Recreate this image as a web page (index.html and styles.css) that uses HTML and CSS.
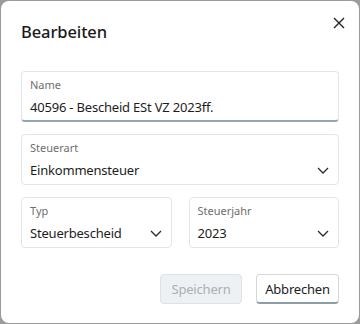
FILE: index.html
```html
<!DOCTYPE html>
<html lang="de">
<head>
    <meta charset="UTF-8">
    <meta name="viewport" content="width=device-width, initial-scale=1.0">
    <title>Bearbeiten</title>
    <link rel="stylesheet" href="styles.css">
</head>
<body>
    <div class="dialog">
        <button class="close" aria-label="Schließen">
            <svg width="12" height="12" viewBox="0 0 12 12"><path d="M1 1 L11 11 M11 1 L1 11" stroke="#222" stroke-width="1.4" fill="none"/></svg>
        </button>
        <h1 class="title">Bearbeiten</h1>

        <div class="field field-active">
            <div class="label">Name</div>
            <div class="value">40596 - Bescheid ESt VZ 2023ff.</div>
        </div>

        <div class="field select">
            <div class="label">Steuerart</div>
            <div class="value">Einkommensteuer</div>
            <svg class="chevron" width="12" height="7" viewBox="0 0 12 7"><path d="M1 1 L6 6 L11 1" stroke="#2a2a2a" stroke-width="1.3" fill="none"/></svg>
        </div>

        <div class="row">
            <div class="field select">
                <div class="label">Typ</div>
                <div class="value">Steuerbescheid</div>
                <svg class="chevron" width="12" height="7" viewBox="0 0 12 7"><path d="M1 1 L6 6 L11 1" stroke="#2a2a2a" stroke-width="1.3" fill="none"/></svg>
            </div>
            <div class="field select">
                <div class="label">Steuerjahr</div>
                <div class="value">2023</div>
                <svg class="chevron" width="12" height="7" viewBox="0 0 12 7"><path d="M1 1 L6 6 L11 1" stroke="#2a2a2a" stroke-width="1.3" fill="none"/></svg>
            </div>
        </div>

        <div class="actions">
            <button class="btn btn-disabled" disabled>Speichern</button>
            <button class="btn">Abbrechen</button>
        </div>
    </div>
</body>
</html>
```

FILE: styles.css
```css
body {
    margin: 0;
    background: #9b9b9b;
    font-family: 'Noto Sans', 'Open Sans', sans-serif;
    color: #1d1d1d;
}
.dialog {
    position: relative;
    margin: 1px;
    height: 322px;
    box-sizing: border-box;
    background: #fff;
    border-radius: 8px;
    padding: 20px 20px 0 20px;
    display: flex;
    flex-direction: column;
}
.close {
    position: absolute;
    top: 16px;
    right: 14px;
    width: 12px;
    height: 12px;
    padding: 0;
    border: none;
    background: none;
    line-height: 0;
}
.title {
    margin: 0 0 28px 0;
    font-size: 16.5px;
    font-weight: 500;
    line-height: 22px;
    letter-spacing: -0.1px;
    color: #1a1a1a;
}
.field {
    position: relative;
    box-sizing: border-box;
    height: 51px;
    border: 1px solid #e2e5e8;
    border-radius: 4px;
    padding: 5px 8px 0 8px;
    margin-bottom: 12px;
}
.field-active {
    border-bottom: 2px solid #93a7b0;
}
.label {
    font-size: 11px;
    line-height: 15px;
    color: #6e6e6e;
}
.value {
    margin-top: 6px;
    font-size: 13px;
    line-height: 18px;
    letter-spacing: -0.2px;
    color: #1d1d1d;
}
.chevron {
    position: absolute;
    right: 9px;
    top: 32px;
}
.row {
    display: grid;
    grid-template-columns: 1fr 1fr;
    column-gap: 17px;
}
.actions {
    margin-top: 14px;
    display: flex;
    justify-content: flex-end;
    gap: 14px;
}
.btn {
    width: 83px;
    height: 30px;
    padding: 0;
    font-family: 'Noto Sans', 'Open Sans', sans-serif;
    font-size: 13px;
    letter-spacing: -0.2px;
    color: #1d1d1d;
    background: #fff;
    border: 1px solid #d3d8dc;
    border-bottom: 2px solid #8c9da6;
    border-radius: 4px;
}
.btn-disabled {
    width: 82px;
    color: #a9b0b6;
    background: #eef1f4;
    border: 1px solid #dde2e6;
}
```
